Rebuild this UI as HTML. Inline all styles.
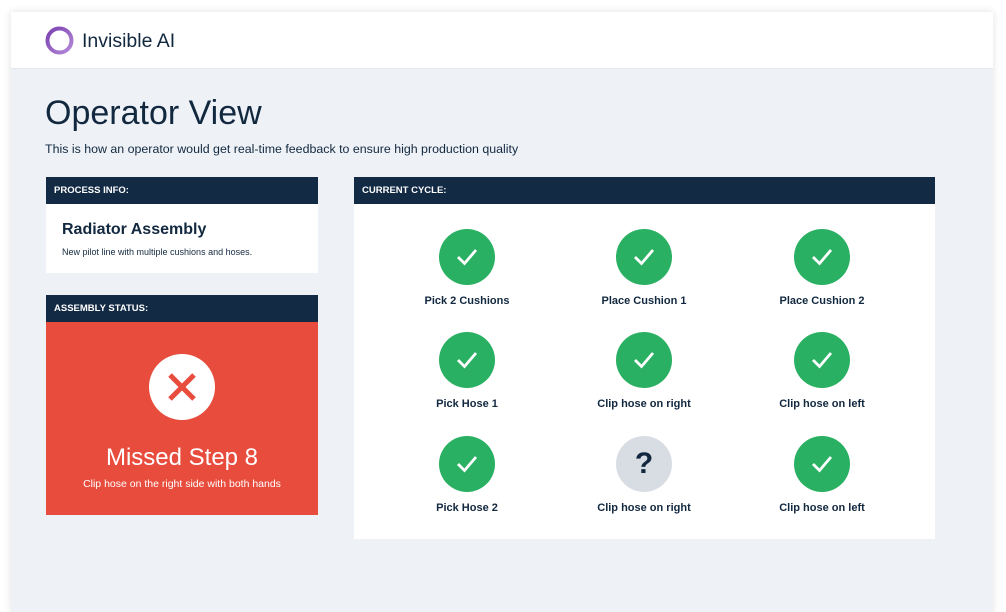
<!DOCTYPE html>
<html><head><meta charset="utf-8"><style>
*{margin:0;padding:0;box-sizing:border-box}
body{width:1006px;height:599px;background:#fff;font-family:"Liberation Sans",sans-serif;position:relative;overflow:hidden;color:#12283f}
.frame{position:absolute;left:11px;top:12px;width:982px;height:600px;background:#eef2f7;box-shadow:0 0 8px rgba(0,0,0,.12)}
.hdr{position:absolute;left:11px;top:12px;width:982px;height:57px;background:#fff;border-bottom:1px solid #e3e6ea}
.a{position:absolute}
.bar{background:#132a45;color:#fff;font-size:9.5px;font-weight:bold;height:27px;line-height:27px;padding-left:8px}
.wcard{background:#fff}
.c{position:absolute;width:56px;height:56px;border-radius:50%;background:#29b062}
.c svg{position:absolute;left:17px;top:18px}
.q{background:#d8dde3;color:#12283f;font-size:30px;font-weight:bold;text-align:center;line-height:56px}
.lb{position:absolute;width:180px;text-align:center;font-size:11px;font-weight:bold;color:#12283f}
</style></head><body>
<div class="frame"></div>
<div class="hdr"></div>
<svg class="a" style="left:45px;top:26px" width="29" height="29"><defs><linearGradient id="g" x1="0" y1="0" x2="1" y2="1"><stop offset="0" stop-color="#7a3fb0"/><stop offset="1" stop-color="#b48ad8"/></linearGradient></defs><circle cx="14.5" cy="14.5" r="12" fill="none" stroke="url(#g)" stroke-width="4"/></svg>
<div class="a" style="left:82px;top:30px;font-size:19.5px;color:#12283f">Invisible AI</div>
<div class="a" style="left:45px;top:94px;font-size:34px;color:#12283f">Operator View</div>
<div class="a" style="left:45px;top:142px;font-size:12.4px;color:#12283f">This is how an operator would get real-time feedback to ensure high production quality</div>

<div class="a bar" style="left:46px;top:177px;width:272px">PROCESS INFO:</div>
<div class="a wcard" style="left:46px;top:204px;width:272px;height:69px"></div>
<div class="a" style="left:62px;top:221px;font-size:16px;font-weight:bold">Radiator Assembly</div>
<div class="a" style="left:62px;top:247px;font-size:9px">New pilot line with multiple cushions and hoses.</div>

<div class="a bar" style="left:46px;top:295px;width:272px">ASSEMBLY STATUS:</div>
<div class="a" style="left:46px;top:322px;width:272px;height:193px;background:#e84c3d"></div>
<div class="a" style="left:149px;top:354px;width:66px;height:66px;border-radius:50%;background:#fff"></div>
<svg class="a" style="left:166px;top:371px" width="32" height="32"><path d="M4 4L28 28M28 4L4 28" stroke="#e84c3d" stroke-width="5"/></svg>
<div class="a" style="left:46px;top:444px;width:272px;text-align:center;color:#fff;font-size:24px">Missed Step 8</div>
<div class="a" style="left:46px;top:478px;width:272px;text-align:center;color:#fff;font-size:10.5px">Clip hose on the right side with both hands</div>

<div class="a bar" style="left:354px;top:177px;width:581px">CURRENT CYCLE:</div>
<div class="a wcard" style="left:354px;top:204px;width:581px;height:335px"></div>

<div class="c" style="left:439px;top:229px"><svg width="22" height="20"><path d="M2 10L8.5 16.5L20 3" fill="none" stroke="#fff" stroke-width="2.8"/></svg></div>
<div class="c" style="left:616px;top:229px"><svg width="22" height="20"><path d="M2 10L8.5 16.5L20 3" fill="none" stroke="#fff" stroke-width="2.8"/></svg></div>
<div class="c" style="left:794px;top:229px"><svg width="22" height="20"><path d="M2 10L8.5 16.5L20 3" fill="none" stroke="#fff" stroke-width="2.8"/></svg></div>
<div class="c" style="left:439px;top:332px"><svg width="22" height="20"><path d="M2 10L8.5 16.5L20 3" fill="none" stroke="#fff" stroke-width="2.8"/></svg></div>
<div class="c" style="left:616px;top:332px"><svg width="22" height="20"><path d="M2 10L8.5 16.5L20 3" fill="none" stroke="#fff" stroke-width="2.8"/></svg></div>
<div class="c" style="left:794px;top:332px"><svg width="22" height="20"><path d="M2 10L8.5 16.5L20 3" fill="none" stroke="#fff" stroke-width="2.8"/></svg></div>
<div class="c" style="left:439px;top:436px"><svg width="22" height="20"><path d="M2 10L8.5 16.5L20 3" fill="none" stroke="#fff" stroke-width="2.8"/></svg></div>
<div class="c q" style="left:616px;top:436px">?</div>
<div class="c" style="left:794px;top:436px"><svg width="22" height="20"><path d="M2 10L8.5 16.5L20 3" fill="none" stroke="#fff" stroke-width="2.8"/></svg></div>

<div class="lb" style="left:377px;top:295px">Pick 2 Cushions</div>
<div class="lb" style="left:554px;top:295px">Place Cushion 1</div>
<div class="lb" style="left:732px;top:295px">Place Cushion 2</div>
<div class="lb" style="left:377px;top:398px">Pick Hose 1</div>
<div class="lb" style="left:554px;top:398px">Clip hose on right</div>
<div class="lb" style="left:732px;top:398px">Clip hose on left</div>
<div class="lb" style="left:377px;top:502px">Pick Hose 2</div>
<div class="lb" style="left:554px;top:502px">Clip hose on right</div>
<div class="lb" style="left:732px;top:502px">Clip hose on left</div>
</body></html>
